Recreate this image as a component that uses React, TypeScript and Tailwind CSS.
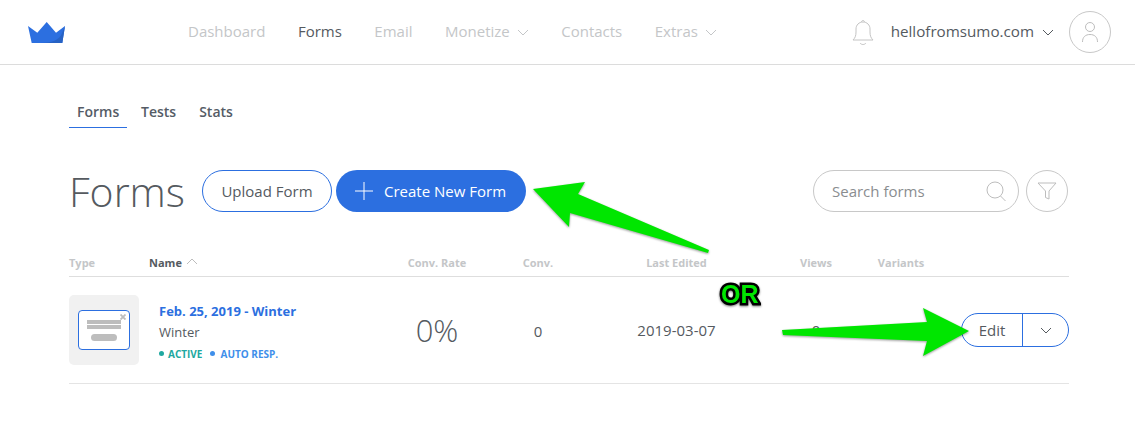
import { ReactNode } from 'react';

const Chevron = ({ className = '' }: { className?: string }) => (
  <svg viewBox="0 0 12 7" fill="none" stroke="currentColor" strokeWidth="1" className={className}>
    <path d="M1 1l5 5 5-5" />
  </svg>
);

const Logo = () => (
  <svg viewBox="0 0 37 21" className="w-[37px] h-[21px]">
    <path d="M0 4l9.3 6.7L18.7 0 28 10.7 37 4l-2.700 17H3.700z" fill="#2c6fe0" />
    <path d="M37 4l-2.700 17H13c10 0 19-3 21-10z" fill="#2762c4" />
  </svg>
);

const NavItem = ({ children, active, caret }: { children: ReactNode; active?: boolean; caret?: boolean }) => (
  <div className={`flex items-center gap-[7px] ${active ? 'text-[#555a5f]' : 'text-[#c4c6c8]'}`}>
    <span>{children}</span>
    {caret && <Chevron className="w-[12px] h-[7px] mt-[2px]" />}
  </div>
);

const Header = () => (
  <header className="h-[65px] border-b border-[#dcdcdc] flex items-center pl-[28px] pr-[24px]">
    <Logo />
    <nav className="ml-[123px] -mt-[2px] flex items-center gap-[32.500px] text-[15px]">
      <NavItem>Dashboard</NavItem>
      <NavItem active>Forms</NavItem>
      <NavItem>Email</NavItem>
      <NavItem caret>Monetize</NavItem>
      <NavItem>Contacts</NavItem>
      <NavItem caret>Extras</NavItem>
    </nav>
    <div className="ml-auto flex items-center">
      <svg viewBox="0 0 22 27" fill="none" stroke="#c4c4c4" strokeWidth="1" className="w-[22px] h-[27px]">
        <path d="M1 21c2-2 3-4 3-8V10c0-4 3-7 7-7s7 3 7 7v3c0 4 1 6 3 8z" />
        <path d="M9.500 3c0-2 3-2 3 0" />
        <path d="M8 24c1.500 2 4.500 2 6 0" />
      </svg>
      <span className="ml-[17px] -mt-[2px] text-[15.200px] text-[#555a5f]">hellofromsumo.com</span>
      <Chevron className="ml-[8px] mt-[1px] w-[12px] h-[7px] text-[#555a5f]" />
      <div className="ml-[15px] w-[42px] h-[42px] rounded-full border border-[#c8c8c8] flex items-center justify-center">
        <svg viewBox="0 0 16 22" fill="none" stroke="#bdbdbd" strokeWidth="1" className="w-[16px] h-[22px]">
          <circle cx="8" cy="6" r="4.500" />
          <path d="M.500 21c0-5 3-7.500 7.500-7.500s7.500 2.500 7.500 7.500" />
        </svg>
      </div>
    </div>
  </header>
);

const Tabs = () => (
  <div className="flex mt-[32px] text-[14px] font-semibold text-[#555c66]">
    <div className="px-[8px] w-[58px] h-[31px] pt-[4px] border-b border-[#2c6fe0]">Forms</div>
    <div className="ml-[14px] pt-[4px]">Tests</div>
    <div className="ml-[23px] pt-[4px]">Stats</div>
  </div>
);

const Toolbar = () => (
  <div className="mt-[42px] flex items-center">
    <h1 className="text-[41px] leading-[42px] font-light text-[#555a5f] w-[133px]">Forms</h1>
    <button className="w-[130px] h-[42px] rounded-full border border-[#2c6fe0] text-[15px] pt-[1px] text-[#555a5f]">
      Upload Form
    </button>
    <button className="ml-[4px] w-[190px] h-[42px] rounded-full bg-[#2c6fe0] text-white text-[15px] flex items-center pl-[19px]">
      <svg viewBox="0 0 18 18" stroke="white" strokeWidth="1" className="w-[18px] h-[18px]">
        <path d="M9 0v18M0 9h18" />
      </svg>
      <span className="ml-[11px] pt-[1px]">Create New Form</span>
    </button>
    <div className="ml-auto w-[206px] h-[42px] rounded-full border border-[#c8c8c8] flex items-center pl-[18px] pr-[11px]">
      <span className="text-[15px] pt-[1px] text-[#8a8d90]">Search forms</span>
      <svg viewBox="0 0 21 21" fill="none" stroke="#bdbdbd" strokeWidth="1" className="ml-auto w-[21px] h-[21px]">
        <circle cx="9" cy="9" r="8" />
        <path d="M14.500 15l5 5" />
      </svg>
    </div>
    <div className="ml-[7px] mr-[1px] w-[42px] h-[42px] rounded-full border border-[#c8c8c8] flex items-center justify-center">
      <svg viewBox="0 0 20 20" fill="none" stroke="#bdbdbd" strokeWidth="1" className="w-[20px] h-[20px]">
        <path d="M1 2h18l-7 8v8l-3.500-1.500V10z" />
      </svg>
    </div>
  </div>
);

const COLS = 'grid grid-cols-[80px_243px_90px_112px_165px_114px_56px_140px]';

const Table = () => (
  <div className="mt-[43px]">
    <div className={`${COLS} h-[22px] border-b border-[#dedede] text-[11px] leading-[16px] font-bold text-[#c4c6c8]`}>
      <div>Type</div>
      <div className="flex items-start gap-[4px] text-[#555a5f]">
        Name
        <Chevron className="w-[12px] h-[7px] mt-[3px] rotate-180 text-[#bdbdbd]" />
      </div>
      <div className="text-center">Conv. Rate</div>
      <div className="text-center">Conv.</div>
      <div className="text-center">Last Edited</div>
      <div className="text-center">Views</div>
      <div className="text-center">Variants</div>
      <div />
    </div>
    <div className={`${COLS} h-[107px] items-center border-b border-[#e4e4e4] text-[15px] text-[#555a5f]`}>
      <div className="w-[70px] h-[70px] rounded-[5px] bg-[#f1f1f1] flex items-center justify-center">
        <div className="relative w-[52px] h-[40px] rounded-[4px] border border-[#2c6fe0] bg-white pt-[9px] pl-[8px]">
          <div className="w-[34px] h-[4px] bg-[#bdbdbd]" />
          <div className="mt-[1px] w-[34px] h-[4px] bg-[#bdbdbd]" />
          <div className="mt-[5px] ml-[4px] w-[26px] h-[7px] rounded-full bg-[#bdbdbd]" />
          <svg viewBox="0 0 6 6" stroke="#bdbdbd" strokeWidth="1.800" className="absolute top-[3px] right-[3px] w-[6px] h-[6px]">
            <path d="M.500 .500l5 5M5.500 .500l-5 5" />
          </svg>
        </div>
      </div>
      <div className="pl-[10px] pt-[2px]">
        <div className="text-[13px] leading-[18px] font-bold text-[#2c6fe0]">Feb. 25, 2019 - Winter</div>
        <div className="mt-[3px] text-[13px] leading-[18px]">Winter</div>
        <div className="mt-[6px] flex items-center text-[10px] leading-[14px] font-bold">
          <span className="w-[5px] h-[5px] rounded-full bg-[#20a8a0]" />
          <span className="ml-[4px] text-[#20a8a0]">ACTIVE</span>
          <span className="ml-[8px] w-[5px] h-[5px] rounded-full bg-[#3f8fea]" />
          <span className="ml-[5px] text-[#3f8fea]">AUTO RESP.</span>
        </div>
      </div>
      <div className="text-center text-[31px] font-light">0%</div>
      <div className="text-center pt-[2px]">0</div>
      <div className="text-center">2019-03-07</div>
      <div className="text-center">0</div>
      <div />
      <div className="flex justify-end">
        <div className="flex w-[108px] h-[34px] rounded-full border border-[#2c6fe0]">
          <div className="w-[61px] border-r border-[#2c6fe0] flex items-center justify-center">Edit</div>
          <div className="flex-1 flex items-center justify-center">
            <Chevron className="w-[12px] h-[7px]" />
          </div>
        </div>
      </div>
    </div>
  </div>
);

const Annotations = () => (
  <>
    <svg viewBox="0 0 200 90" className="absolute left-[525px] top-[175px] w-[200px] h-[90px] drop-shadow-[0_1px_1px_rgba(0,0,0,0.4)]">
      <path d="M8 14L60 7 53 19 184 75 183 78 45 38 44 52z" fill="#00e600" />
    </svg>
    <svg viewBox="0 0 200 60" className="absolute left-[775px] top-[303px] w-[200px] h-[60px] drop-shadow-[0_1px_1px_rgba(0,0,0,0.4)]">
      <path d="M7 27L152 19 148 5 194 28 148 53 152 38 8 32z" fill="#00e600" />
    </svg>
    <div className="absolute left-[721px] top-[281px] text-[25px] leading-[26px] font-bold text-[#00e600] [font-family:'Liberation_Sans',sans-serif] [-webkit-text-stroke:5px_#000] [paint-order:stroke_fill] [stroke-linejoin:round] drop-shadow-[0_1px_1px_rgba(0,0,0,0.5)]">
      OR
    </div>
  </>
);

export default function App() {
  return (
    <div className="relative w-[1135px] h-[438px] overflow-hidden bg-white [font-family:'Open_Sans',sans-serif]">
      <Header />
      <main className="w-[1000px] ml-[69px]">
        <Tabs />
        <Toolbar />
        <Table />
      </main>
      <Annotations />
    </div>
  );
}
